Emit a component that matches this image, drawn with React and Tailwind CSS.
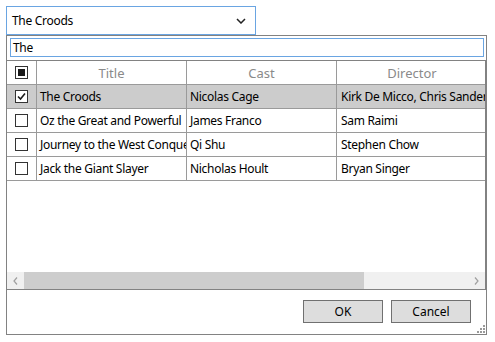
const rows = [
  { title: "The Croods", cast: "Nicolas Cage", director: "Kirk De Micco, Chris Sanders", checked: true },
  { title: "Oz the Great and Powerful", cast: "James Franco", director: "Sam Raimi" },
  { title: "Journey to the West Conquering the Demons", cast: "Qi Shu", director: "Stephen Chow" },
  { title: "Jack the Giant Slayer", cast: "Nicholas Hoult", director: "Bryan Singer" },
];

const CheckBox = ({ state }) => (
  <div className="w-[13px] h-[13px] border border-[#333333] bg-white flex items-center justify-center">
    {state === "partial" && <div className="w-[7px] h-[7px] bg-[#1a1a1a]" />}
    {state === "checked" && (
      <svg width="9" height="9" viewBox="0 0 9 9">
        <path d="M1 4.5 L3.5 7 L8 1.5" fill="none" stroke="#1a1a1a" strokeWidth="1.6" />
      </svg>
    )}
  </div>
);

const App = () => {
  return (
    <div className="w-[495px] h-[342px] bg-white pl-[6px] pt-[6px] text-[12px] tracking-[-0.3px] text-black font-['Segoe_UI','Noto_Sans',sans-serif]">
      {/* Combo */}
      <div className="w-[250px] h-[29px] border border-[#6aa5e2] flex items-center justify-between pl-[5px] pr-[9px]">
        <span>The Croods</span>
        <svg width="10" height="6" viewBox="0 0 10 6">
          <path d="M1 1 L5 5 L9 1" fill="none" stroke="#222" strokeWidth="1.5" />
        </svg>
      </div>

      {/* Popup */}
      <div className="relative w-[481px] h-[300px] border border-[#828282] flex flex-col">
        <div className="ml-[3px] mt-[2px] w-[474px] h-[19px] border border-[#6aa5e2] flex items-center px-[2px]">
          The
        </div>

        <div className="mt-[3px] w-[479px] h-[230px] border-t border-b border-r border-[#828282] flex flex-col overflow-hidden">
          <div className="flex h-[24px] shrink-0 border-b border-[#9a9a9a] text-[#8a8a8a] text-[13px] tracking-normal">
            <div className="w-[30px] shrink-0 border-r border-[#9a9a9a] flex items-center justify-center">
              <CheckBox state="partial" />
            </div>
            <div className="w-[150px] shrink-0 border-r border-[#9a9a9a] flex items-center justify-center pt-[3px]">Title</div>
            <div className="w-[150px] shrink-0 border-r border-[#9a9a9a] flex items-center justify-center pt-[3px]">Cast</div>
            <div className="w-[150px] shrink-0 flex items-center justify-center pt-[3px]">Director</div>
          </div>

          {rows.map((r) => (
            <div
              key={r.title}
              className={`flex h-[24px] shrink-0 border-b border-[#9a9a9a] ${r.checked ? "bg-[#cccccc]" : "bg-white"}`}
            >
              <div className="w-[30px] shrink-0 border-r border-[#9a9a9a] flex items-center justify-center">
                <CheckBox state={r.checked ? "checked" : "none"} />
              </div>
              <div className="w-[150px] shrink-0 border-r border-[#9a9a9a] flex items-center px-[3px] overflow-hidden whitespace-nowrap">{r.title}</div>
              <div className="w-[150px] shrink-0 border-r border-[#9a9a9a] flex items-center px-[3px] overflow-hidden whitespace-nowrap">{r.cast}</div>
              <div className="flex-1 min-w-0 flex items-center px-[4px] overflow-hidden whitespace-nowrap">{r.director}</div>
            </div>
          ))}

          <div className="flex-1" />

          {/* Horizontal scrollbar */}
          <div className="h-[17px] shrink-0 flex bg-[#f0f0f0]">
            <div className="w-[17px] flex items-center justify-center">
              <svg width="5" height="8" viewBox="0 0 5 8">
                <path d="M4 0.5 L1 4 L4 7.5" fill="none" stroke="#a0a0a0" strokeWidth="1.2" />
              </svg>
            </div>
            <div className="w-[340px] bg-[#cdcdcd]" />
            <div className="flex-1" />
            <div className="w-[17px] flex items-center justify-center">
              <svg width="5" height="8" viewBox="0 0 5 8">
                <path d="M1 0.5 L4 4 L1 7.5" fill="none" stroke="#a0a0a0" strokeWidth="1.2" />
              </svg>
            </div>
          </div>
        </div>

        <div className="flex justify-end gap-[8px] pr-[15px] mt-[10px] tracking-normal">
          <div className="w-[80px] h-[23px] bg-[#dddddd] border border-[#707070] flex items-center justify-center">OK</div>
          <div className="w-[80px] h-[23px] bg-[#dddddd] border border-[#707070] flex items-center justify-center">Cancel</div>
        </div>

        {/* Resize grip */}
        <svg className="absolute right-0 bottom-0" width="9" height="9" viewBox="0 0 9 9">
          <rect x="6" y="0" width="2" height="2" fill="#9a9a9a" />
          <rect x="3" y="3" width="2" height="2" fill="#9a9a9a" />
          <rect x="6" y="3" width="2" height="2" fill="#9a9a9a" />
          <rect x="0" y="6" width="2" height="2" fill="#9a9a9a" />
          <rect x="3" y="6" width="2" height="2" fill="#9a9a9a" />
          <rect x="6" y="6" width="2" height="2" fill="#9a9a9a" />
        </svg>
      </div>
    </div>
  );
};

export default App;
